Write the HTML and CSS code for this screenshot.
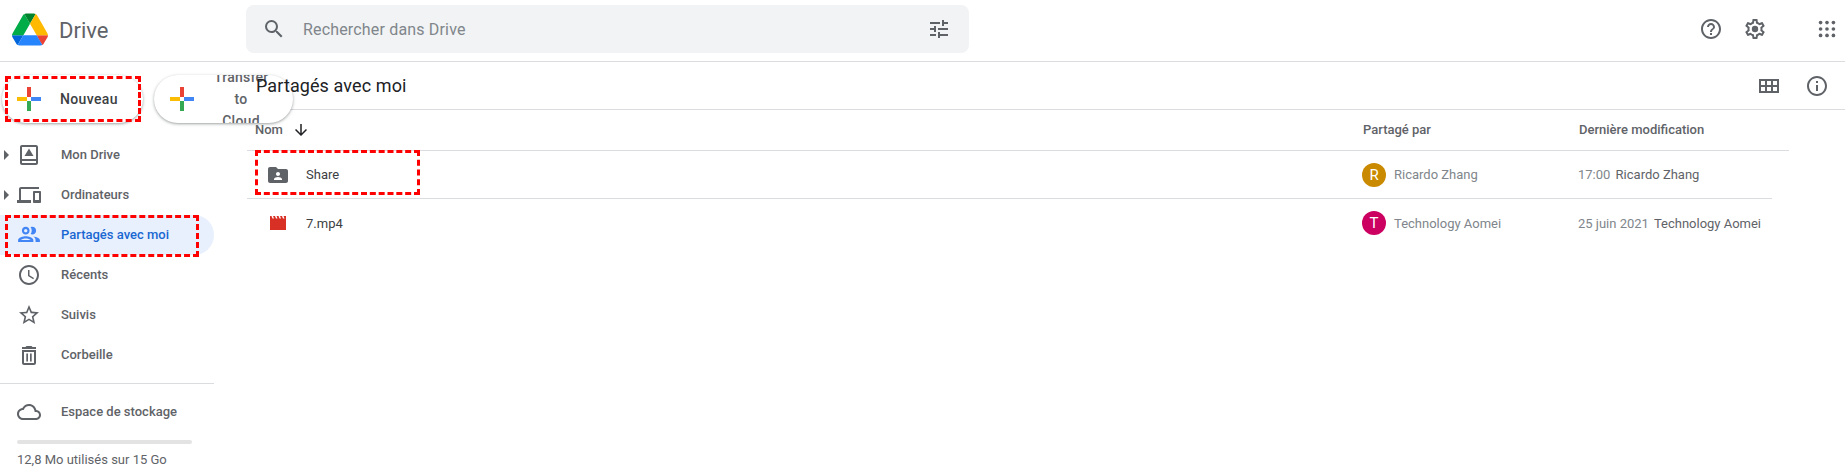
FILE: index.html
```html
<!DOCTYPE html>
<html lang="fr">
<head>
	<meta charset="UTF-8">
	<title>Partagés avec moi - Google Drive</title>
	<link rel="stylesheet" href="styles.css">
</head>
<body>

	<!-- barre du haut -->
	<header class="topbar">
		<div class="brand">
			<svg class="logo" viewBox="0 0 87.3 78">
				<path d="m6.6 66.85 3.85 6.65c.8 1.4 1.95 2.5 3.3 3.3l13.75-23.8h-27.5c0 1.55.4 3.1 1.2 4.5z" fill="#0066da"/>
				<path d="m43.65 25-13.75-23.8c-1.35.8-2.5 1.9-3.3 3.3l-25.4 44a9.06 9.06 0 0 0 -1.2 4.5h27.5z" fill="#00ac47"/>
				<path d="m73.55 76.8c1.35-.8 2.5-1.9 3.3-3.3l1.6-2.75 7.65-13.25c.8-1.4 1.2-2.95 1.2-4.5h-27.502l5.852 11.5z" fill="#ea4335"/>
				<path d="m43.65 25 13.75-23.8c-1.35-.8-2.9-1.2-4.5-1.2h-18.5c-1.6 0-3.15.45-4.5 1.2z" fill="#00832d"/>
				<path d="m59.8 53h-32.3l-13.75 23.8c1.35.8 2.9 1.2 4.5 1.2h50.8c1.6 0 3.15-.45 4.5-1.2z" fill="#2684fc"/>
				<path d="m73.4 26.5-12.7-22c-.8-1.4-1.95-2.5-3.3-3.3l-13.75 23.8 16.15 28h27.45c0-1.55-.4-3.1-1.2-4.5z" fill="#ffba00"/>
			</svg>
			<span class="brand-name">Drive</span>
		</div>
		<div class="search">
			<svg class="icon" viewBox="0 0 24 24"><path d="M15.5 14h-.79l-.28-.27A6.471 6.471 0 0 0 16 9.5 6.5 6.5 0 1 0 9.5 16c1.61 0 3.09-.59 4.23-1.57l.27.28v.79l5 4.99L20.49 19l-4.99-5zm-6 0C7.01 14 5 11.99 5 9.5S7.01 5 9.5 5 14 7.01 14 9.5 11.99 14 9.5 14z"/></svg>
			<span class="search-text">Rechercher dans Drive</span>
			<svg class="icon" viewBox="0 0 24 24"><path d="M3 17v2h6v-2H3zM3 5v2h10V5H3zm10 16v-2h8v-2h-8v-2h-2v6h2zM7 9v2H3v2h4v2h2V9H7zm14 4v-2H11v2h10zm-6-4h2V7h4V5h-4V3h-2v6z"/></svg>
		</div>
		<div class="top-actions">
			<svg class="icon" viewBox="0 0 24 24"><path d="M11 18h2v-2h-2v2zm1-16C6.48 2 2 6.48 2 12s4.48 10 10 10 10-4.48 10-10S17.52 2 12 2zm0 18c-4.41 0-8-3.59-8-8s3.59-8 8-8 8 3.59 8 8-3.59 8-8 8zm0-14c-2.21 0-4 1.79-4 4h2c0-1.1.9-2 2-2s2 .9 2 2c0 2-3 1.75-3 5h2c0-2.25 3-2.5 3-5 0-2.21-1.79-4-4-4z"/></svg>
			<svg class="icon" viewBox="0 0 24 24"><path d="M19.43 12.98c.04-.32.07-.64.07-.98 0-.34-.03-.66-.07-.98l2.11-1.65c.19-.15.24-.42.12-.64l-2-3.46c-.09-.16-.26-.25-.44-.25-.06 0-.12.01-.17.03l-2.49 1c-.52-.4-1.08-.73-1.69-.98l-.38-2.65C14.46 2.18 14.25 2 14 2h-4c-.25 0-.46.18-.49.42l-.38 2.65c-.61.25-1.17.59-1.69.98l-2.49-1c-.06-.02-.12-.03-.18-.03-.17 0-.34.09-.43.25l-2 3.46c-.13.22-.07.49.12.64l2.11 1.65c-.04.32-.07.65-.07.98 0 .33.03.66.07.98l-2.11 1.65c-.19.15-.24.42-.12.64l2 3.46c.09.16.26.25.44.25.06 0 .12-.01.17-.03l2.49-1c.52.4 1.08.73 1.69.98l.38 2.65c.03.24.24.42.49.42h4c.25 0 .46-.18.49-.42l.38-2.65c.61-.25 1.17-.59 1.69-.98l2.49 1c.06.02.12.03.18.03.17 0 .34-.09.43-.25l2-3.46c.12-.22.07-.49-.12-.64l-2.11-1.65zm-1.98-1.71c.04.31.05.52.05.73 0 .21-.02.43-.05.73l-.14 1.13.89.7 1.08.84-.7 1.21-1.27-.51-1.04-.42-.9.68c-.43.32-.84.56-1.25.73l-1.06.43-.16 1.13-.2 1.35h-1.4l-.19-1.35-.16-1.13-1.06-.43c-.43-.18-.83-.41-1.23-.71l-.91-.7-1.06.43-1.27.51-.7-1.21 1.08-.84.89-.7-.14-1.13c-.03-.31-.05-.54-.05-.74s.02-.43.05-.73l.14-1.13-.89-.7-1.08-.84.7-1.21 1.27.51 1.04.42.9-.68c.43-.32.84-.56 1.25-.73l1.06-.43.16-1.13.2-1.35h1.39l.19 1.35.16 1.13 1.06.43c.43.18.83.41 1.23.71l.91.7 1.06-.43 1.27-.51.7 1.21-1.07.85-.89.7.14 1.13z"/><circle cx="12" cy="12" r="3.2"/></svg>
			<svg class="icon apps" viewBox="0 0 24 24">
				<circle cx="5" cy="5" r="2"/><circle cx="12" cy="5" r="2"/><circle cx="19" cy="5" r="2"/>
				<circle cx="5" cy="12" r="2"/><circle cx="12" cy="12" r="2"/><circle cx="19" cy="12" r="2"/>
				<circle cx="5" cy="19" r="2"/><circle cx="12" cy="19" r="2"/><circle cx="19" cy="19" r="2"/>
			</svg>
		</div>
	</header>

	<div class="layout">

		<!-- colonne de gauche -->
		<aside class="sidebar">
			<div class="new-row">
				<button class="pill new-btn">
					<svg class="plus" viewBox="0 0 24 24">
						<path d="M10 0h4v10h-4z" fill="#ea4335"/>
						<path d="M14 10h10v4H14z" fill="#4285f4"/>
						<path d="M10 14h4v10h-4z" fill="#34a853"/>
						<path d="M0 10h10v4H0z" fill="#fbbc04"/>
					</svg>
					<span class="new-label">Nouveau</span>
				</button>
				<span class="mark mark-new"></span>
				<button class="pill transfer-btn">
					<svg class="plus" viewBox="0 0 24 24">
						<path d="M10 0h4v10h-4z" fill="#ea4335"/>
						<path d="M14 10h10v4H14z" fill="#4285f4"/>
						<path d="M10 14h4v10h-4z" fill="#34a853"/>
						<path d="M0 10h10v4H0z" fill="#fbbc04"/>
					</svg>
					<span class="transfer-label">Transfer to Cloud</span>
				</button>
			</div>

			<nav class="nav">
				<a class="nav-item has-caret">
					<svg class="icon" viewBox="0 0 24 24"><path fill-rule="evenodd" d="M5 2h14c1.100 0 2 .9 2 2v16c0 1.100-.9 2-2 2H5c-1.100 0-2-.9-2-2V4c0-1.100.9-2 2-2zm0 2v12h14V4H5zm0 14v2h14v-2H5z"/><path d="M12 5.500l4.500 7.500H7.500z"/></svg>
					<span>Mon Drive</span>
				</a>
				<a class="nav-item has-caret">
					<svg class="icon" viewBox="0 0 24 24"><path d="M4 6h18V4H4c-1.1 0-2 .9-2 2v11H0v3h14v-3H4V6zm19 2h-6c-.55 0-1 .45-1 1v10c0 .55.45 1 1 1h6c.55 0 1-.45 1-1V9c0-.55-.45-1-1-1zm-1 9h-4v-7h4v7z"/></svg>
					<span>Ordinateurs</span>
				</a>
				<a class="nav-item active">
					<svg class="icon" viewBox="1 1.500 22 22"><path d="M9 13.750c-2.340 0-7 1.170-7 3.500V19h14v-1.750c0-2.330-4.660-3.500-7-3.500zM4.340 17c.84-.58 2.870-1.250 4.660-1.250s3.820.67 4.660 1.250H4.340zM9 12c1.930 0 3.500-1.570 3.500-3.500S10.930 5 9 5 5.500 6.570 5.500 8.500 7.070 12 9 12zm0-5c.83 0 1.500.67 1.500 1.500S9.830 10 9 10s-1.500-.67-1.500-1.500S8.170 7 9 7zm7.040 6.810c1.160.84 1.960 1.960 1.960 3.440V19h4v-1.750c0-2.020-3.500-3.170-5.960-3.440zM15 12c1.930 0 3.500-1.570 3.500-3.500S16.930 5 15 5c-.54 0-1.040.13-1.500.35.63.89 1 1.980 1 3.150s-.37 2.260-1 3.150c.46.22.96.35 1.500.35z"/></svg>
					<span>Partagés avec moi</span>
					<span class="mark mark-shared"></span>
				</a>
				<a class="nav-item">
					<svg class="icon" viewBox="0 0 24 24"><path d="M11.99 2C6.47 2 2 6.48 2 12s4.47 10 9.99 10C17.52 22 22 17.52 22 12S17.52 2 11.99 2zM12 20c-4.42 0-8-3.58-8-8s3.58-8 8-8 8 3.58 8 8-3.58 8-8 8zm.5-13H11v6l5.25 3.15.75-1.23-4.5-2.67z"/></svg>
					<span>Récents</span>
				</a>
				<a class="nav-item">
					<svg class="icon" viewBox="0 0 24 24"><path d="M22 9.24l-7.19-.62L12 2 9.19 8.63 2 9.24l5.46 4.73L5.82 21 12 17.27 18.18 21l-1.63-7.03L22 9.24zM12 15.4l-3.76 2.27 1-4.28-3.32-2.88 4.38-.38L12 6.1l1.71 4.04 4.38.38-3.32 2.88 1 4.28L12 15.4z"/></svg>
					<span>Suivis</span>
				</a>
				<a class="nav-item">
					<svg class="icon" viewBox="0 0 24 24"><path d="M9.500 3h5l1 1H19v2H5V4h3.500l1-1z"/><path fill-rule="evenodd" d="M5 7h14v13c0 1.100-.9 2-2 2H7c-1.100 0-2-.9-2-2V7zm2 2v11h10V9H7z"/><path d="M9.300 10.500h1.700V18.500H9.300zM13 10.500h1.700V18.500H13z"/></svg>
					<span>Corbeille</span>
				</a>
			</nav>

			<div class="storage">
				<a class="nav-item">
					<svg class="icon" viewBox="0 0 24 24"><path d="M19.35 10.04C18.67 6.59 15.64 4 12 4 9.11 4 6.6 5.64 5.35 8.04 2.34 8.36 0 10.91 0 14c0 3.31 2.69 6 6 6h13c2.76 0 5-2.24 5-5 0-2.64-2.05-4.78-4.65-4.96zM19 18H6c-2.21 0-4-1.79-4-4 0-2.05 1.53-3.76 3.56-3.97l1.07-.11.5-.95C8.08 7.14 9.94 6 12 6c2.62 0 4.88 1.86 5.39 4.43l.3 1.5 1.53.11c1.56.1 2.78 1.41 2.78 2.96 0 1.65-1.35 3-3 3z"/></svg>
					<span>Espace de stockage</span>
				</a>
				<div class="storage-bar"></div>
				<p class="storage-text">12,8 Mo utilisés sur 15 Go</p>
			</div>
		</aside>

		<!-- liste des fichiers -->
		<main class="main">
			<div class="title-bar">
				<h1 class="title">Partagés avec moi</h1>
				<svg class="icon" viewBox="0 0 24 24"><path fill-rule="evenodd" d="M2 5h20v14H2V5zm2 2v4h4V7H4zm6 0v4h4V7h-4zm6 0v4h4V7h-4zM4 13v4h4v-4H4zm6 0v4h4v-4h-4zm6 0v4h4v-4h-4z"/></svg>
				<svg class="icon" viewBox="0 0 24 24"><path d="M11 7h2v2h-2zm0 4h2v6h-2zm1-9C6.48 2 2 6.48 2 12s4.48 10 10 10 10-4.48 10-10S17.52 2 12 2zm0 18c-4.41 0-8-3.59-8-8s3.59-8 8-8 8 3.59 8 8-3.59 8-8 8z"/></svg>
			</div>

			<div class="row head-row">
				<div class="col-name">
					<span>Nom</span>
					<svg class="arrow" viewBox="0 0 24 24"><path d="M20 12l-1.41-1.41L13 16.17V4h-2v12.17l-5.58-5.59L4 12l8 8 8-8z"/></svg>
				</div>
				<div class="col-by">Partagé par</div>
				<div class="col-date">Dernière modification</div>
			</div>

			<div class="row file-row first-file">
				<div class="col-name">
					<svg class="icon file-icon" viewBox="0 0 24 24"><path d="M20 6h-8l-2-2H4c-1.1 0-1.99.9-1.99 2L2 18c0 1.1.9 2 2 2h16c1.1 0 2-.9 2-2V8c0-1.1-.9-2-2-2zm-8 3c1.100 0 2 .9 2 2s-.9 2-2 2-2-.9-2-2 .9-2 2-2zm4 8H8v-1c0-1.330 2.670-2 4-2s4 .67 4 2v1z"/></svg>
					<span>Share</span>
				</div>
				<div class="col-by">
					<span class="avatar avatar-r">R</span>
					<span class="person">Ricardo Zhang</span>
				</div>
				<div class="col-date">
					<span class="when">17:00</span>
					<span class="editor">Ricardo Zhang</span>
				</div>
				<span class="mark mark-share"></span>
			</div>

			<div class="row file-row last-file">
				<div class="col-name">
					<svg class="file-icon video" viewBox="0 0 24 24"><path d="M4 5h1.500l1 2.500H8L7 5h2l1 2.500h1.500L10.500 5h2l1 2.500H15L14 5h2l1 2.500h1.500L17.500 5H20v14H4z"/></svg>
					<span>7.mp4</span>
				</div>
				<div class="col-by">
					<span class="avatar avatar-t">T</span>
					<span class="person">Technology Aomei</span>
				</div>
				<div class="col-date">
					<span class="when">25 juin 2021</span>
					<span class="editor">Technology Aomei</span>
				</div>
			</div>
		</main>
	</div>

</body>
</html>
```

FILE: styles.css
```css
* {
	margin: 0;
	padding: 0;
	box-sizing: border-box;
}
body {
	background-color: #fff;
	height: 467px;
	overflow: hidden;
	font-family: Roboto, "Liberation Sans", sans-serif;
	font-size: 13px;
	color: #3c4043;
}
.icon {
	width: 24px;
	height: 24px;
	fill: #5f6368;
	flex: none;
}

/* barre du haut */
.topbar {
	display: flex;
	align-items: center;
	height: 62px;
	padding-bottom: 3px;
	border-bottom: 1px solid #dadce0;
}
.brand {
	display: flex;
	align-items: center;
	width: 246px;
	padding-left: 12px;
}
.logo {
	width: 36px;
	height: 33px;
}
.brand-name {
	margin-left: 11px;
	padding-top: 3px;
	font-size: 22px;
	color: #5f6368;
}
.search {
	display: flex;
	align-items: center;
	width: 723px;
	height: 48px;
	padding: 0 18px 0 16px;
	background-color: #f1f3f4;
	border-radius: 8px;
}
.search-text {
	flex: 1;
	margin-left: 17px;
	font-size: 16px;
	letter-spacing: .17px;
	color: #80868b;
}
.top-actions {
	display: flex;
	align-items: center;
	margin-left: auto;
	padding-right: 7px;
	gap: 20px;
}
.apps {
	margin-left: 29px;
	width: 22px;
	height: 22px;
}

/* colonne de gauche */
.layout {
	display: flex;
}
.sidebar {
	width: 246px;
	flex: none;
}
.new-row {
	position: relative;
	display: flex;
	gap: 11px;
	padding: 13px 0 12px 2px;
}
.pill {
	display: flex;
	align-items: center;
	flex: none;
	height: 48px;
	background-color: #fff;
	border: none;
	border-radius: 24px;
	box-shadow: 0 1px 2px 0 rgba(60,64,67,.3), 0 1px 3px 1px rgba(60,64,67,.15);
	font-family: Roboto, sans-serif;
	font-size: 14px;
	font-weight: 500;
	color: #3c4043;
	overflow: hidden;
}
.plus {
	width: 24px;
	height: 24px;
	flex: none;
}
.new-btn {
	width: 141px;
	padding-left: 15px;
}
.new-label {
	margin-left: 19px;
	letter-spacing: .35px;
}
.transfer-btn {
	position: relative;
	width: 139px;
	padding-left: 16px;
}
.transfer-label {
	flex: none;
	width: 54px;
	margin-left: 20px;
	line-height: 22px;
	text-align: center;
	letter-spacing: .25px;
	color: #5f6368;
}

/* les cadres rouges */
.mark {
	position: absolute;
	border: 3px dashed #f00;
	pointer-events: none;
}
.mark-new {
	left: 5px;
	top: 14px;
	width: 136px;
	height: 46px;
}
.mark-shared {
	left: 5px;
	top: 0;
	width: 194px;
	height: 42px;
}
.mark-share {
	left: 8px;
	top: -1px;
	width: 165px;
	height: 45px;
}

.nav-item {
	position: relative;
	display: flex;
	align-items: center;
	height: 40px;
	width: 214px;
	padding-left: 17px;
	font-weight: 500;
	font-size: 13px;
	color: #5f6368;
}
.nav-item span:not(.mark) {
	margin-left: 20px;
	padding-bottom: 2px;
}
.has-caret::before {
	content: "";
	position: absolute;
	left: 4px;
	top: 15px;
	border-left: 5px solid #5f6368;
	border-top: 5px solid transparent;
	border-bottom: 5px solid transparent;
}
.active {
	background-color: #e8f0fe;
	border-radius: 0 20px 20px 0;
	color: #1a67d2;
}
.active .icon {
	fill: #4285f4;
}
.storage {
	margin-top: 8px;
	width: 214px;
	border-top: 1px solid #dadce0;
	padding-top: 8px;
}
.storage-bar {
	width: 175px;
	height: 4px;
	margin: 8px 0 0 17px;
	background-color: #e3e3e3;
	border-radius: 2px;
}
.storage-text {
	margin: 8px 0 0 17px;
	color: #5f6368;
	white-space: nowrap;
}

/* liste des fichiers */
.main {
	flex: 1;
}
.title-bar {
	display: flex;
	align-items: center;
	gap: 24px;
	height: 48px;
	padding: 0 16px 0 10px;
	border-bottom: 1px solid #dadce0;
}
.title {
	position: relative;
	z-index: 1;
	margin-right: auto;
	font-size: 18px;
	font-weight: 400;
	letter-spacing: .1px;
	color: #202124;
}
.row {
	position: relative;
	display: flex;
	align-items: center;
	margin-left: 1px;
}
.head-row {
	width: 1542px;
	height: 41px;
	padding-bottom: 1px;
	border-bottom: 1px solid #dadce0;
	font-weight: 500;
	color: #5f6368;
}
.file-row {
	height: 48px;
}
.first-file {
	width: 1525px;
	border-bottom: 1px solid #dadce0;
}
.col-name {
	display: flex;
	align-items: center;
	width: 1116px;
	padding-left: 8px;
	flex: none;
}
.file-row .col-name {
	padding-left: 19px;
}
.arrow {
	width: 18px;
	height: 18px;
	margin-left: 9px;
	fill: #202124;
}
.file-icon {
	width: 24px;
	height: 24px;
	margin-right: 16px;
}
.video {
	width: 24px;
	fill: #d93025;
}
.col-by {
	display: flex;
	align-items: center;
	width: 216px;
	flex: none;
}
.avatar {
	display: block;
	width: 24px;
	height: 24px;
	margin: 0 8px 0 -1px;
	border-radius: 50%;
	font-size: 15px;
	line-height: 24px;
	text-align: center;
	color: #fff;
}
.avatar-r {
	background-color: #c98a00;
}
.avatar-t {
	background-color: #cc0060;
}
.person {
	color: #80868b;
}
.col-date {
	white-space: nowrap;
}
.file-row .col-date {
	margin-left: -1px;
}
.when {
	margin-right: 2px;
	color: #80868b;
}
.editor {
	color: #5f6368;
}
```
